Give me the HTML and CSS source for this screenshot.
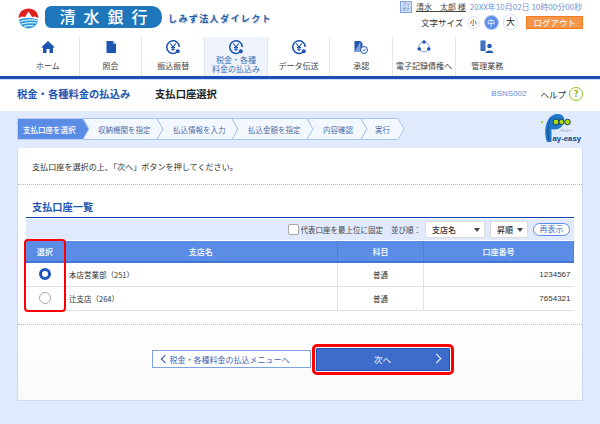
FILE: index.html
```html
<!DOCTYPE html>
<html lang="ja">
<head>
  <meta charset="utf-8">
  <title>支払口座選択</title>
  <link rel="stylesheet" href="styles.css">
</head>
<body>

<header class="top">
  <div class="brand">
    <svg class="mark" width="21" height="21" viewBox="0 0 21 21">
      <path d="M0.500 10 C1 4 5 0.500 10.500 0.500 C16 0.500 20 4 20.500 10 L17 8.500 L14 9 L10.500 3.500 L7 9 L4 8.500 Z" fill="#e0201c"/>
      <path d="M1 11.500 C6 9.500 15 9.500 20 11.500 C19.500 17 15.500 20.500 10.500 20.500 C5.500 20.500 1.500 17 1 11.500 Z" fill="#2f9bd8"/>
      <path d="M2 13.500 C8 11.500 14 11.500 19.500 12.500 M3.500 16 C8 14.500 13 14.500 18 15 M6 18.500 C9 17.500 12 17.500 15.500 17.800" stroke="#fff" stroke-width="1" fill="none"/>
    </svg>
    <div class="bank">清水銀行</div>
    <div class="sub">しみず法人ダイレクト</div>
  </div>
  <div class="user">
    <div class="user-line">
      <span class="kana">フリ<br>ガナ</span>
      <span class="name">清水　太郎 様</span>
      <span class="date">20XX年10月02日 10時00分00秒</span>
    </div>
    <div class="user-line size-line">
      <span class="size-label">文字サイズ</span>
      <span class="size">小</span>
      <span class="size on">中</span>
      <span class="size big">大</span>
      <span class="logout">ログアウト</span>
    </div>
  </div>
</header>

<nav class="nav">
  <a class="nav-item">
    <svg width="14" height="14" viewBox="0 0 14 14"><path d="M7 1 L14 7.500 L12 7.500 L12 13 L8.500 13 L8.500 9 L5.500 9 L5.500 13 L2 13 L2 7.500 L0 7.500 Z" fill="#1d55b0"/></svg>
    <span>ホーム</span>
  </a>
  <a class="nav-item">
    <svg width="14" height="14" viewBox="0 0 14 14"><path d="M2.500 1 L9 1 L12 4 L12 13 L2.500 13 Z" fill="#1d55b0"/><path d="M9 1 L9 4 L12 4" fill="#9db9e6"/></svg>
    <span>照会</span>
  </a>
  <a class="nav-item">
    <svg width="16" height="16" viewBox="0 0 16 16"><use href="#yen"/></svg>
    <span>振込振替</span>
  </a>
  <a class="nav-item current">
    <svg width="16" height="16" viewBox="0 0 16 16"><use href="#yen"/></svg>
    <span>税金・各種<br>料金の払込み</span>
  </a>
  <a class="nav-item">
    <svg width="16" height="16" viewBox="0 0 16 16"><use href="#yen"/></svg>
    <span>データ伝送</span>
  </a>
  <a class="nav-item">
    <svg width="14" height="14" viewBox="0 0 14 14"><path d="M0.500 1 L6.500 1 L8.500 3 L8.500 6 L6 11.500 L0.500 12 Z" fill="#1d55b0"/><path d="M6.500 1 L6.500 12 L0.500 12" fill="#7f9fd8"/><circle cx="10" cy="10" r="3.500" fill="#fff" stroke="#1d55b0"/><path d="M8.500 10 L9.700 11.200 L11.600 8.900" stroke="#1d55b0" fill="none"/></svg>
    <span>承認</span>
  </a>
  <a class="nav-item">
    <svg width="14" height="14" viewBox="0 0 14 14"><circle cx="7" cy="7" r="5" fill="none" stroke="#7f9fd8"/><circle cx="7" cy="2" r="1.800" fill="#1d55b0"/><circle cx="2.200" cy="9" r="1.800" fill="#1d55b0"/><circle cx="11.800" cy="9" r="1.800" fill="#1d55b0"/></svg>
    <span>電子記録債権へ</span>
  </a>
  <a class="nav-item">
    <svg width="14" height="14" viewBox="0 0 14 14"><path d="M0.500 0.500 L5.500 0.500 L5.500 11 L0.500 11 Z" fill="#1d55b0"/><path d="M2 1 V10.500 M4 1 V10.500" stroke="#9db9e6" stroke-width="0.600"/><circle cx="9.500" cy="6" r="2.300" fill="#1d55b0"/><path d="M5.500 13 C5.500 9.500 13.500 9.500 13.500 13 Z" fill="#1d55b0"/></svg>
    <span>管理業務</span>
  </a>
  <svg class="defs" width="0" height="0">
    <symbol id="yen" viewBox="0 0 16 16">
      <path d="M12 13 A6.300 6.300 0 1 1 14.300 8" fill="none" stroke="#1d55b0" stroke-width="1.600"/>
      <path d="M5.300 4.500 L8 8 L10.700 4.500 M8 8 L8 12 M6 8.500 L10 8.500 M6 10.300 L10 10.300" fill="none" stroke="#1d55b0" stroke-width="1.100"/>
      <circle cx="12.800" cy="12.300" r="2" fill="#1d55b0"/>
    </symbol>
  </svg>
</nav>

<div class="title-row">
  <div class="title-left">
    <span class="title-parent">税金・各種料金の払込み</span>
    <span class="title-page">支払口座選択</span>
  </div>
  <div class="title-right">
    <span class="code">BSNS002</span>
    <span class="help">ヘルプ</span>
    <span class="help-mark">?</span>
  </div>
</div>

<main class="main">
  <div class="steps-row">
    <svg class="steps" width="392" height="22" viewBox="0 0 392 22">
      <path d="M0.500 0.500 H66 L72 11 L66 21.500 H0.500 Z" fill="#5b8de6" stroke="#b9d0f4"/>
      <path d="M66 0.500 H140 L146 11 L140 21.500 H66 L72 11 Z" fill="#f3f7fe" stroke="#a9c4f0"/>
      <path d="M140 0.500 H215 L221 11 L215 21.500 H140 L146 11 Z" fill="#f3f7fe" stroke="#a9c4f0"/>
      <path d="M215 0.500 H290 L296 11 L290 21.500 H215 L221 11 Z" fill="#f3f7fe" stroke="#a9c4f0"/>
      <path d="M290 0.500 H344 L350 11 L344 21.500 H290 L296 11 Z" fill="#f3f7fe" stroke="#a9c4f0"/>
      <path d="M344 0.500 H381 L387 11 L381 21.500 H344 L350 11 Z" fill="#f3f7fe" stroke="#a9c4f0"/>
      <text x="6" y="15" class="step-text on">支払口座を選択</text>
      <text x="81" y="15" class="step-text">収納機関を指定</text>
      <text x="156" y="15" class="step-text">払込情報を入力</text>
      <text x="231" y="15" class="step-text">払込金額を指定</text>
      <text x="306" y="15" class="step-text">内容確認</text>
      <text x="358" y="15" class="step-text">実行</text>
    </svg>
    <svg class="payeasy" width="42" height="34" viewBox="0 0 42 34">
      <path d="M7 30 C3 18 6 3 17 2 C25 1.500 26 9 22 14 C19 18 14 18 11.500 17 L11.500 30 Z" fill="#1f78c8"/>
      <path d="M9.500 29 C7.500 18 9 8 13 5 C10 6 6.500 14 7.500 27 Z" fill="#0f4f96"/>
      <circle cx="16" cy="10" r="3" fill="#b5dc00" stroke="#123f80"/>
      <circle cx="21.500" cy="10" r="2.600" fill="#b5dc00" stroke="#123f80"/>
      <circle cx="27.500" cy="10" r="2.800" fill="#b5dc00" stroke="#123f80"/>
      <circle cx="2" cy="10" r="1" fill="#7fc400"/>
      <text x="20" y="20" class="pay-kana">ペイジー</text>
      <text x="12.500" y="29" class="pay-text">ay-easy</text>
    </svg>
  </div>

  <section class="card">
    <p class="lead">支払口座を選択の上、「次へ」ボタンを押してください。</p>
    <div class="list">
      <h2 class="list-title">支払口座一覧</h2>
      <div class="tools">
        <span class="check"></span>
        <span class="tool-label">代表口座を最上位に固定</span>
        <span class="tool-label sort">並び順：</span>
        <span class="select wide">支店名<i class="arrow"></i></span>
        <span class="select">昇順<i class="arrow"></i></span>
        <span class="redisplay">再表示</span>
      </div>
      <table class="table">
        <tr>
          <th class="c-sel">選択</th>
          <th>支店名</th>
          <th class="c-type">科目</th>
          <th class="c-num">口座番号</th>
        </tr>
        <tr>
          <td class="c-sel"><span class="radio on"></span></td>
          <td>本店営業部（251）</td>
          <td class="c-type center">普通</td>
          <td class="c-num right">1234567</td>
        </tr>
        <tr>
          <td class="c-sel"><span class="radio"></span></td>
          <td>辻支店（264）</td>
          <td class="c-type center">普通</td>
          <td class="c-num right">7654321</td>
        </tr>
      </table>
      <div class="mark-sel"></div>
    </div>
    <div class="actions">
      <a class="btn-back"><i class="chev-left"></i>税金・各種料金の払込メニューへ</a>
      <a class="btn-next">次へ<i class="chev-right"></i></a>
    </div>
  </section>
</main>

</body>
</html>
```

FILE: styles.css
```css
* {
  box-sizing: border-box;
}
html, body {
  height: 100%;
}
body {
  margin: 0;
  background: #e0eafc;
  color: #333;
  font-family: "Noto Sans CJK JP", "Liberation Sans", sans-serif;
  font-size: 8px;
  overflow: hidden;
}
.top {
  display: flex;
  justify-content: space-between;
  height: 37px;
  padding: 0 17px 0 18px;
  background: #fff;
}
.brand {
  display: flex;
  align-items: center;
  height: 34px;
}
.mark {
  margin-top: 2px;
}
.bank {
  width: 117px;
  height: 22px;
  margin-left: 6px;
  padding-left: 8px;
  background: #1f77bb;
  border-radius: 6px 10px 10px 6px;
  color: #fff;
  font-size: 16px;
  letter-spacing: 8px;
  line-height: 21px;
  text-align: center;
  font-weight: 500;
  white-space: nowrap;
}
.sub {
  margin-top: 2px;
  margin-left: 6px;
  color: #1f5fa8;
  font-size: 9px;
  font-weight: 700;
  letter-spacing: 1.400px;
  text-shadow: 1px 1px 1px #c4cede;
  white-space: nowrap;
}
.user {
  width: 183px;
}
.user-line {
  display: flex;
  align-items: center;
  height: 13px;
  white-space: nowrap;
}
.kana {
  width: 12px;
  height: 12px;
  margin-right: 4px;
  background: #cfe0f8;
  border: 1px solid #7fa3dd;
  color: #2a5db0;
  font-size: 4px;
  line-height: 5px;
  text-align: center;
}
.name {
  margin-right: 4px;
  color: #444;
  font-size: 8px;
  text-decoration: underline;
}
.date {
  color: #6f93d6;
  font-size: 8px;
}
.size-line {
  height: 18px;
}
.size-label {
  width: 43px;
  margin-left: 21px;
  margin-right: 3px;
  color: #333;
  font-size: 8.500px;
}
.size {
  width: 13px;
  height: 13px;
  margin-right: 5px;
  border: 1px solid #d5e2f8;
  border-radius: 50%;
  font-size: 7px;
  line-height: 11px;
  text-align: center;
}
.size.on {
  width: 15px;
  height: 15px;
  margin-left: -1px;
  margin-right: 3px;
  background: #5b8de6;
  border-color: #a9c4f0;
  color: #fff;
  font-size: 8px;
  line-height: 13px;
}
.size.big {
  width: 16px;
  height: 16px;
  margin-right: 8px;
  margin-left: 1px;
  color: #222;
  font-size: 9px;
  line-height: 13px;
}
.logout {
  width: 57px;
  height: 13px;
  background: #f5954a;
  border: 1px solid #ef7a1f;
  color: #fff;
  font-size: 8.500px;
  line-height: 10px;
  text-align: center;
}
.nav {
  display: flex;
  height: 42px;
  padding-left: 17px;
  background: #fff;
  border-bottom: 3px solid #1a4fb8;
}
.nav-item {
  display: flex;
  flex-direction: column;
  align-items: center;
  width: 62.700px;
  height: 39px;
  padding-top: 2px;
  border-right: 1px solid #e3e6ea;
  color: #444;
  font-size: 8px;
  line-height: 9px;
  text-align: center;
  white-space: nowrap;
}
.nav-item svg {
  height: 16px;
}
.nav-item span {
  margin-top: 6px;
}
.nav-item.current {
  background: #eef3fc;
  color: #4a6fb0;
}
.nav-item.current span {
  margin-top: 0;
}
.nav-item:last-of-type {
  border-right: none;
}
.defs {
  position: absolute;
}
.title-row {
  display: flex;
  justify-content: space-between;
  align-items: center;
  height: 32px;
  padding: 0 17px 4px;
  background: #fff;
  border-top: 1px solid #cfdcf6;
}
.title-parent {
  color: #1e55b0;
  font-size: 10.300px;
  font-weight: 700;
}
.title-page {
  margin-left: 23px;
  color: #222;
  font-size: 10.300px;
  font-weight: 700;
}
.title-right {
  display: flex;
  align-items: center;
}
.code {
  margin-right: 14px;
  color: #5f8ae0;
  font-size: 8px;
  font-family: "Liberation Sans", sans-serif;
}
.help {
  margin-right: 3px;
  color: #222;
  font-size: 8.500px;
}
.help-mark {
  width: 14px;
  height: 14px;
  border: 1.500px solid #8fc31f;
  border-radius: 50%;
  color: #7fb10f;
  font-size: 9px;
  font-weight: 700;
  line-height: 11px;
  text-align: center;
}
.main {
  padding: 7px 17px 0;
}
.steps-row {
  display: flex;
  align-items: flex-start;
  height: 30px;
}
.payeasy {
  margin-left: auto;
  margin-right: 1px;
  margin-top: -6px;
}
.step-text {
  fill: #4c6fa8;
  font-size: 7.500px;
}
.step-text.on {
  fill: #fff;
  font-weight: 500;
}
.pay-kana {
  fill: #123f80;
  font-size: 3px;
}
.pay-text {
  fill: #123f80;
  font-size: 7.800px;
  font-weight: 700;
  font-family: "Liberation Sans", sans-serif;
}
.card {
  height: 253px;
  background: linear-gradient(#fff 70%, #fafafa);
  border-left: 1px solid #cbd9f3;
  border-right: 1px solid #cbd9f3;
  border-bottom: 1px solid #cbd9f3;
}
.lead {
  height: 37px;
  margin: 0;
  padding-left: 14px;
  border-bottom: 1px dotted #bbb;
  color: #333;
  font-size: 8.100px;
  line-height: 38px;
}
.list {
  position: relative;
  height: 140px;
  padding: 0 8px;
  border-bottom: 1px dotted #bbb;
}
.list-title {
  height: 33px;
  margin: 0;
  padding: 14px 6px 0;
  border-bottom: 1px solid #0f3fb0;
  color: #1e55b0;
  font-size: 10.200px;
  font-weight: 700;
  line-height: 15px;
}
.tools {
  display: flex;
  align-items: center;
  justify-content: flex-end;
  height: 21px;
  margin-top: 1px;
  padding-right: 4px;
  background: #e0eafc;
}
.check {
  width: 11px;
  height: 11px;
  margin-right: 2px;
  background: #fff;
  border: 1px solid #aaa;
  border-radius: 2px;
}
.tool-label {
  color: #444;
  font-size: 7.500px;
}
.tool-label.sort {
  margin-left: 8px;
  margin-right: 4px;
}
.select {
  display: flex;
  align-items: center;
  justify-content: space-between;
  width: 38px;
  height: 17px;
  margin-right: 5px;
  padding: 0 4px 0 6px;
  background: #fff;
  border: 1px solid #dcdcdc;
  color: #333;
  font-size: 8px;
  font-weight: 500;
}
.select.wide {
  width: 60px;
}
.arrow {
  width: 0;
  height: 0;
  border-left: 3.500px solid transparent;
  border-right: 3.500px solid transparent;
  border-top: 4px solid #444;
}
.redisplay {
  width: 37px;
  height: 13px;
  background: #fff;
  border: 1px solid #5b8de6;
  border-radius: 7px;
  color: #4a72c0;
  font-size: 8px;
  line-height: 10px;
  text-align: center;
}
.table {
  width: 100%;
  border-collapse: collapse;
  table-layout: fixed;
  margin-top: 1px;
}
.table th {
  height: 21px;
  padding: 0;
  background: #5b8de6;
  border-right: 1px solid #4d7ed8;
  border-bottom: 2px solid #4474cf;
  color: #fff;
  font-size: 8px;
  font-weight: 500;
}
.table td {
  height: 24px;
  padding: 0 0 0 5px;
  border-bottom: 1px solid #e2e2e2;
  color: #333;
  font-size: 7.500px;
}
.table td.c-type {
  border-left: 1px solid #e2e2e2;
  border-right: 1px solid #e2e2e2;
}
.c-sel {
  width: 38px;
}
.table td.c-sel {
  padding: 0;
  text-align: center;
}
.c-type {
  width: 86px;
}
.c-num {
  width: 150px;
}
.table td.center {
  padding: 0;
  text-align: center;
}
.table td.right {
  padding: 0 3px 0 0;
  text-align: right;
  font-family: "Liberation Sans", sans-serif;
  font-size: 8px;
}
.radio {
  display: block;
  width: 12px;
  height: 12px;
  margin: 0 auto;
  background: #fff;
  border: 1px solid #aaa;
  border-radius: 50%;
}
.radio.on {
  background: #fff;
  border: 3.500px solid #1f55c0;
}
.mark-sel {
  position: absolute;
  left: 6px;
  top: 54px;
  width: 41.500px;
  height: 73px;
  border: 2.500px solid #f00;
  border-radius: 4px;
}
.actions {
  display: flex;
  align-items: center;
  justify-content: center;
  height: 76px;
  padding-left: 1px;
  padding-bottom: 8px;
}
.btn-back {
  display: flex;
  align-items: center;
  width: 159px;
  height: 18px;
  padding-left: 9px;
  background: #fff;
  border: 1px solid #7fa3dd;
  color: #3f66b5;
  font-size: 8px;
  white-space: nowrap;
}
.chev-left {
  width: 6px;
  height: 6px;
  margin-right: 2px;
  border-left: 1.500px solid #1e4fb0;
  border-bottom: 1.500px solid #1e4fb0;
  transform: rotate(45deg);
}
.btn-next {
  position: relative;
  width: 134px;
  height: 23px;
  margin-left: 5px;
  background: #3d6cca;
  border: 1px solid #1f4fb0;
  outline: 3px solid #f00;
  outline-offset: 1px;
  border-radius: 1px;
  color: #fff;
  font-size: 8.500px;
  line-height: 21px;
  text-align: center;
}
.chev-right {
  position: absolute;
  right: 9px;
  top: 6px;
  width: 7px;
  height: 7px;
  border-top: 1.500px solid #fff;
  border-right: 1.500px solid #fff;
  transform: rotate(45deg);
}
```
